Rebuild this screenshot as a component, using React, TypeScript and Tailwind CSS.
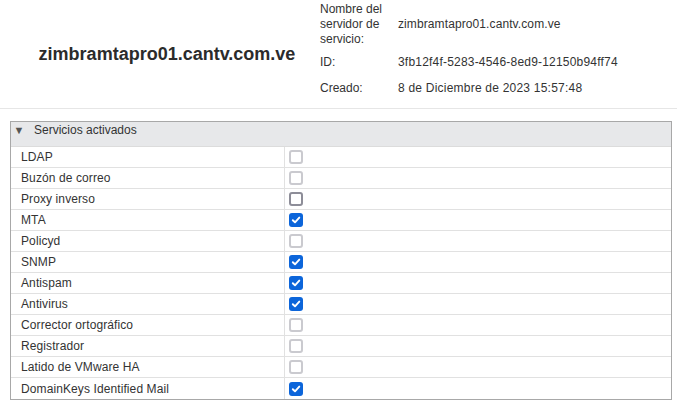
import React from "react";

const services: { name: string; checked: boolean; disabled: boolean }[] = [
  { name: "LDAP", checked: false, disabled: true },
  { name: "Buzón de correo", checked: false, disabled: true },
  { name: "Proxy inverso", checked: false, disabled: false },
  { name: "MTA", checked: true, disabled: false },
  { name: "Policyd", checked: false, disabled: true },
  { name: "SNMP", checked: true, disabled: false },
  { name: "Antispam", checked: true, disabled: false },
  { name: "Antivirus", checked: true, disabled: false },
  { name: "Corrector ortográfico", checked: false, disabled: true },
  { name: "Registrador", checked: false, disabled: true },
  { name: "Latido de VMware HA", checked: false, disabled: true },
  { name: "DomainKeys Identified Mail", checked: true, disabled: false },
];

function Box({ checked, disabled }: { checked: boolean; disabled: boolean }) {
  if (checked) {
    return (
      <span className="w-[14px] h-[14px] rounded-[3px] bg-[#0c65da] flex items-center justify-center">
        <svg width="10" height="10" viewBox="0 0 10 10">
          <path d="M1.8 5.2 L4 7.3 L8.3 2.6" fill="none" stroke="white" strokeWidth="1.9" strokeLinecap="round" strokeLinejoin="round" />
        </svg>
      </span>
    );
  }
  return (
    <span
      className={
        disabled
          ? "w-[14px] h-[14px] rounded-[3px] border-2 border-[#cacacf] bg-white"
          : "w-[14px] h-[14px] rounded-[3px] border-2 border-[#8d8d98] bg-white"
      }
    />
  );
}

export default function App() {
  return (
    <div
      className="w-[677px] h-[405px] bg-white text-[#333333] text-[12px] overflow-hidden"
      style={{ fontFamily: '"Liberation Sans", Arial, sans-serif' }}
    >
      <div className="h-[109px] border-b border-[#e6e6e6] flex">
        <div className="w-[310px] flex items-center justify-center pl-[24px]">
          <div className="text-[18px] font-bold text-[#2b2b2b]">zimbramtapro01.cantv.com.ve</div>
        </div>
        <div className="pt-[2px] leading-[15px]">
          <div className="flex h-[45px]">
            <div className="w-[88px] pl-[10px]">
              Nombre del
              <br />
              servidor de
              <br />
              servicio:
            </div>
            <div className="flex items-center tracking-[0.1px]">zimbramtapro01.cantv.com.ve</div>
          </div>
          <div className="flex mt-[8px]">
            <div className="w-[88px] pl-[10px]">ID:</div>
            <div className="tracking-[0.2px]">3fb12f4f-5283-4546-8ed9-12150b94ff74</div>
          </div>
          <div className="flex mt-[11px]">
            <div className="w-[88px] pl-[10px]">Creado:</div>
            <div className="tracking-[0.22px]">8 de Diciembre de 2023 15:57:48</div>
          </div>
        </div>
      </div>
      <div className="mt-[12px] ml-[10px] w-[662px] border border-[#a8a8a8]">
        <div className="h-[25px] bg-[#e7e8ea] flex items-start pt-[1px] leading-[15px] border-b border-[#dcdcdc]">
          <span className="text-[11px] text-[#555] ml-[2px] w-[12px] text-center">▼</span>
          <span className="ml-[9px]">Servicios activados</span>
        </div>
        {services.map((s, i) => (
          <div
            key={s.name}
            className={
              "flex h-[21px] " + (i < services.length - 1 ? "border-b border-[#e1e1e1]" : "")
            }
          >
            <div className="w-[274px] pl-[10px] flex items-center border-r border-[#e1e1e1] tracking-[0.1px]">{s.name}</div>
            <div className="flex items-center pl-[4px]">
              <Box checked={s.checked} disabled={s.disabled} />
            </div>
          </div>
        ))}
      </div>
    </div>
  );
}
